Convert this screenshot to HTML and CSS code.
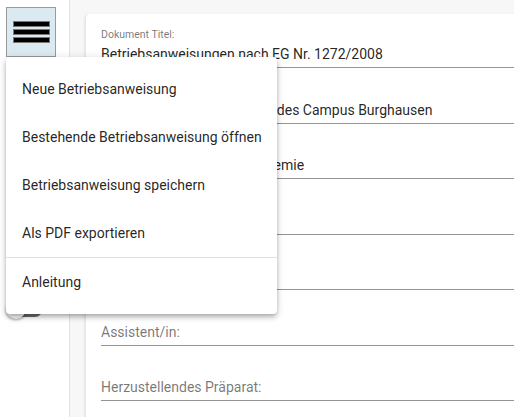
FILE: index.html
```html
<!DOCTYPE html>
<html lang="de">
<head>
<meta charset="utf-8">
<link rel="stylesheet" href="styles.css">
</head>
<body>
<div class="app">
  <aside class="sidebar">
    <button class="menu-btn" aria-label="Menü">
      <span class="bar"></span><span class="bar"></span><span class="bar"></span>
    </button>
    <div class="toggle"><span class="track"></span><span class="thumb"></span></div>
  </aside>
  <main class="main">
    <section class="card">
      <div class="field">
        <label class="label">Dokument Titel:</label>
        <div class="value">Betriebsanweisungen nach EG Nr. 1272/2008</div>
      </div>
      <div class="field">
        <label class="label">Geltungsbereich:</label>
        <div class="value">Gültig für alle Chemielabore des Campus Burghausen</div>
      </div>
      <div class="field">
        <label class="label">Studiengang:</label>
        <div class="value">Fakultät für Angewandte Chemie</div>
      </div>
      <div class="field">
        <label class="label">Praktikum:</label>
        <div class="value"></div>
      </div>
      <div class="field">
        <label class="label">Name:</label>
        <div class="value"></div>
      </div>
      <div class="field">
        <div class="value placeholder">Assistent/in:</div>
      </div>
      <div class="field">
        <div class="value placeholder">Herzustellendes Präparat:</div>
      </div>
    </section>
  </main>
  <nav class="menu">
    <div class="item">Neue Betriebsanweisung</div>
    <div class="item">Bestehende Betriebsanweisung öffnen</div>
    <div class="item">Betriebsanweisung speichern</div>
    <div class="item">Als PDF exportieren</div>
    <div class="divider"></div>
    <div class="item">Anleitung</div>
  </nav>
</div>
</body>
</html>
```
FILE: styles.css
```css
* { box-sizing: border-box; }
html, body { margin: 0; padding: 0; height: 100%; }
body {
  font-family: Roboto, "Noto Sans", sans-serif;
  color: rgba(0,0,0,0.87);
  background: #fff;
  overflow: hidden;
}
.app {
  position: relative;
  display: flex;
  height: 417px;
}
.sidebar {
  width: 70px;
  flex: none;
  border-right: 1px solid #e2e2e2;
  background: #fff;
  padding: 7px 0 0 6px;
  position: relative;
}
.menu-btn {
  width: 50px;
  height: 50px;
  border: 1px solid #9a9a9a;
  background: #dbe9f0;
  padding: 13px 0 0 6px;
  margin: 0;
  display: flex;
  flex-direction: column;
  gap: 2px;
  align-items: flex-start;
}
.bar {
  display: block;
  width: 37px;
  height: 6px;
  background: #000;
  border: 1px solid #777;
}
.toggle {
  position: absolute;
  left: 6px;
  top: 300px;
  width: 36px;
  height: 20px;
}
.track {
  position: absolute;
  left: 8px;
  top: 3px;
  width: 28px;
  height: 14px;
  border-radius: 7px;
  background: #6b6b6b;
}
.thumb {
  position: absolute;
  left: 0;
  top: -1px;
  width: 20px;
  height: 20px;
  border-radius: 50%;
  background: #fafafa;
  box-shadow: 0 1px 3px rgba(0,0,0,0.4);
}
.main {
  flex: 1;
  background: #f7f7f7;
  padding: 14px 0 0 15px;
  min-width: 0;
}
.card {
  background: #fff;
  height: 100%;
  border-radius: 4px 0 0 0;
  border-left: 1px solid #e6e6e6;
  box-shadow: 0 1px 3px rgba(0,0,0,0.12);
  padding: 0 0 0 15px;
  margin-right: -20px;
}
.field {
  height: 55.5px;
  display: flex;
  flex-direction: column;
  justify-content: flex-end;
  border-bottom: 1px solid #949494;
  white-space: nowrap;
}
.field:first-child { height: 54px; }
.label {
  font-size: 10.5px;
  color: rgba(0,0,0,0.54);
  line-height: 12px;
  margin-bottom: 5px;
}
.value {
  font-size: 14px;
  line-height: 16px;
  height: 16px;
  margin-bottom: 5px;
}
.placeholder { color: rgba(0,0,0,0.54); }
.menu {
  position: absolute;
  left: 6px;
  top: 57px;
  width: 271px;
  background: #fff;
  border-radius: 4px;
  padding: 8px 0;
  box-shadow: 0 2px 4px -1px rgba(0,0,0,0.2), 0 4px 5px 0 rgba(0,0,0,0.14), 0 1px 10px 0 rgba(0,0,0,0.12);
  z-index: 10;
}
.item {
  height: 48px;
  line-height: 48px;
  padding: 0 16px;
  font-size: 14px;
  color: rgba(0,0,0,0.87);
  white-space: nowrap;
}
.divider {
  height: 1px;
  background: #e0e0e0;
}
```
